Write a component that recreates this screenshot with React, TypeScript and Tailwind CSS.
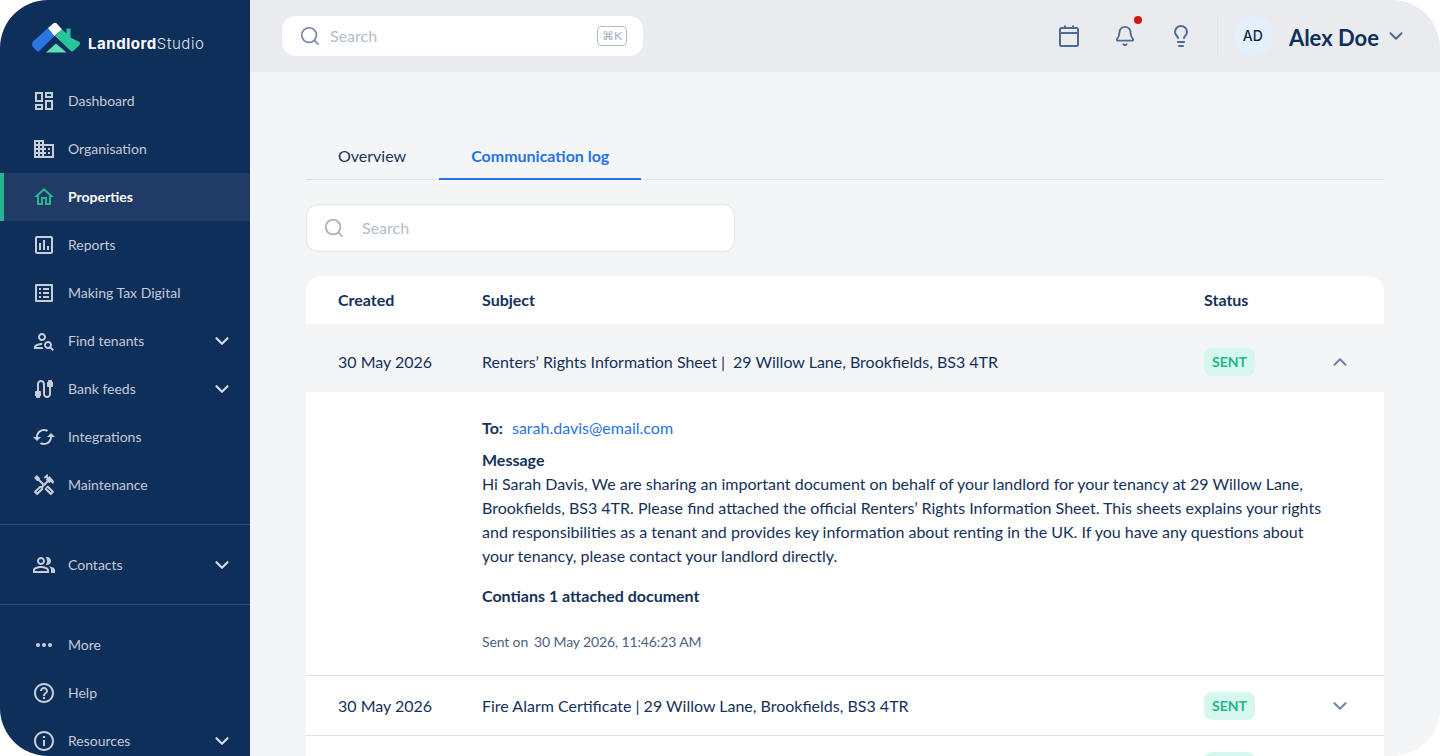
import type { ComponentType, ReactNode } from 'react';
import { Search, ChevronDown, ChevronUp, Bell, Lightbulb } from 'lucide-react';
import {
  MdOutlineDashboard,
  MdOutlineDomain,
  MdOutlineHome,
  MdOutlineAssessment,
  MdOutlineListAlt,
  MdOutlinePersonSearch,
  MdOutlineCable,
  MdOutlineSync,
  MdOutlineHandyman,
  MdOutlinePeopleAlt,
  MdMoreHoriz,
  MdHelpOutline,
  MdInfoOutline,
} from 'react-icons/md';

type NavItem = {
  label: string;
  icon: ComponentType<{ size?: number; className?: string }>;
  caret?: boolean;
  active?: boolean;
  iconClass?: string;
};

const mainNav: NavItem[] = [
  { label: 'Dashboard', icon: MdOutlineDashboard },
  { label: 'Organisation', icon: MdOutlineDomain },
  { label: 'Properties', icon: MdOutlineHome, active: true },
  { label: 'Reports', icon: MdOutlineAssessment },
  { label: 'Making Tax Digital', icon: MdOutlineListAlt },
  { label: 'Find tenants', icon: MdOutlinePersonSearch, caret: true },
  { label: 'Bank feeds', icon: MdOutlineCable, caret: true },
  { label: 'Integrations', icon: MdOutlineSync, iconClass: 'rotate-90' },
  { label: 'Maintenance', icon: MdOutlineHandyman },
];

const bottomNav: NavItem[] = [
  { label: 'More', icon: MdMoreHoriz },
  { label: 'Help', icon: MdHelpOutline },
  { label: 'Resources', icon: MdInfoOutline, caret: true },
];

function Logo() {
  return (
    <svg width="48" height="32" viewBox="32 22 48 32" className="shrink-0">
      <path d="M33 41.500 48 28 55 35.500 39.500 50.800Q38 52 36.500 50.800L33 47Q31 44 33 41.500Z" fill="#2b74e2" />
      <path d="M48 28 53.500 23.300Q55 22.300 56.500 23.300L62 29.500 54.500 36Z" fill="#ffffff" />
      <path d="M62 29.500 66.500 33.500V28.500H70.500V37.500L79.500 42Q80.500 43.500 79.500 45L73.500 50.800Q72 52 70.500 50.800L55 36Z" fill="#28c49a" />
      <path d="M46 52.500 56 43.500 66.500 52.500Z" fill="#5fe0b8" />
    </svg>
  );
}

function NavRow({ item }: { item: NavItem }) {
  const Icon = item.icon;
  return (
    <div
      className={
        item.active
          ? 'h-12 shrink-0 flex items-center pl-8 pr-[17px] bg-[#203c66] relative'
          : 'h-12 shrink-0 flex items-center pl-8 pr-[17px]'
      }
    >
      {item.active && <span className="absolute left-0 top-0 bottom-0 w-1 bg-[#27b58f]" />}
      <Icon
        size={24}
        className={(item.active ? 'text-[#27b58f] shrink-0 ' : 'text-[#c8ced8] shrink-0 ') + (item.iconClass ?? '')}
      />
      <span
        className={
          item.active
            ? 'ml-3 flex-1 text-sm font-bold text-white'
            : 'ml-3 flex-1 text-sm text-[#c3cad6]'
        }
      >
        {item.label}
      </span>
      {item.caret && <ChevronDown size={22} strokeWidth={2.4} className="text-[#d5dae2]" />}
    </div>
  );
}

function Sidebar() {
  return (
    <aside className="w-[250px] shrink-0 bg-[#0f2f5b] flex flex-col">
      <div className="h-[77px] shrink-0 flex items-start pl-8 pt-[22px]">
        <Logo />
        <span className="ml-2 mt-3 text-[15px] leading-5 text-white font-['Inter',sans-serif] font-bold tracking-[0.55px]">
          Landlord<span className="font-light text-[#dfe4ea]">Studio</span>
        </span>
      </div>
      {mainNav.map((item) => (
        <NavRow key={item.label} item={item} />
      ))}
      <div className="mt-[15px] shrink-0 border-t border-[#2b4770] pt-4 pb-[15px]">
        <NavRow item={{ label: 'Contacts', icon: MdOutlinePeopleAlt, caret: true }} />
      </div>
      <div className="shrink-0 border-t border-[#2b4770] pt-4">
        {bottomNav.map((item) => (
          <NavRow key={item.label} item={item} />
        ))}
      </div>
    </aside>
  );
}

function TopBar() {
  return (
    <header className="h-[72px] shrink-0 bg-[#e9ebef] flex items-center pl-8 pr-[33px]">
      <div className="w-[361px] h-10 bg-white rounded-[14px] flex items-center pl-[17px] pr-4">
        <Search size={22} strokeWidth={1.9} className="text-[#7688a6]" />
        <span className="ml-[9px] flex-1 text-base text-[#b0bbcb]">Search</span>
        <span className="w-[30px] h-5 border border-[#b0bbcb] rounded-[4px] flex items-center justify-center text-xs text-[#a3afc1]">
          ⌘K
        </span>
      </div>
      <div className="ml-auto flex items-center">
        <svg width="24" height="24" viewBox="0 0 24 24" fill="none" stroke="#4d6a94" strokeWidth="2" className="mr-8">
          <rect x="3" y="4" width="18" height="18" rx="1.500" />
          <path d="M3 9H21M8 1.500V5M16 1.500V5" />
        </svg>
        <div className="relative mr-8 w-6 flex justify-center">
          <Bell size={22} strokeWidth={2} className="text-[#4d6a94]" />
          <span className="absolute -top-[9px] right-[-5px] w-2 h-2 rounded-full bg-[#d0180f]" />
        </div>
        <div className="w-6 flex justify-center mr-6">
          <Lightbulb size={24} strokeWidth={2} className="text-[#4d6a94]" />
        </div>
        <div className="w-px h-10 bg-[#dfe1e6] mr-[15px]" />
        <div className="w-10 h-10 rounded-full bg-[#e3f0fc] flex items-center justify-center text-sm font-['Inter',sans-serif] font-medium text-[#14233c]">
          AD
        </div>
        <span className="ml-4 pt-[3px] text-[22px] font-bold leading-7 text-[#0f2f5b]">Alex Doe</span>
        <ChevronDown size={22} strokeWidth={2.2} className="ml-[6px] text-[#4d6a94]" />
      </div>
    </header>
  );
}

function Tabs() {
  return (
    <div className="flex h-12 border-b border-[#dfe2e7]">
      <div className="h-12 pl-8 pr-[33px] flex items-center text-base text-[#1a3358]">Overview</div>
      <div className="h-12 px-8 pt-[2px] flex items-center text-base font-bold text-[#2673e4] border-b-2 border-[#2673e4]">
        Communication log
      </div>
    </div>
  );
}

function SearchField() {
  return (
    <div className="mt-6 w-[429px] h-12 bg-white border border-[#dfe3e8] rounded-xl flex items-center pl-4">
      <Search size={22} strokeWidth={1.9} className="text-[#a3afc1]" />
      <span className="ml-[17px] text-base text-[#b0bbcb]">Search</span>
    </div>
  );
}

function SentBadge({ children }: { children?: ReactNode }) {
  return (
    <span className="w-[51px] h-7 bg-[#d6f7ed] rounded-lg flex items-center justify-center text-sm font-bold text-[#27b58f]">
      {children}
    </span>
  );
}

function LogRow({
  date,
  subject,
  toggle,
  className,
}: {
  date: string;
  subject: ReactNode;
  toggle?: ReactNode;
  className: string;
}) {
  return (
    <div className={'grid grid-cols-[144px_722px_100px_1fr] items-center pl-8 text-base text-[#15315a] ' + className}>
      <span>{date}</span>
      <span>{subject}</span>
      <SentBadge>SENT</SentBadge>
      {toggle}
    </div>
  );
}

function Details() {
  return (
    <div className="bg-white pl-44 pr-[54px] pt-6 pb-[23px] text-base leading-6 text-[#15315a]">
      <div>
        <span className="font-bold">To:</span>
        <span className="ml-[9px] text-[#2673e4]">sarah.davis@email.com</span>
      </div>
      <div className="mt-2 font-bold">Message</div>
      <p>
        Hi Sarah Davis, We are sharing an important document on behalf of your landlord for your tenancy at 29 Willow Lane,
        Brookfields, BS3 4TR. Please find attached the official Renters’ Rights Information Sheet. This sheets explains your
        rights and responsibilities as a tenant and provides key information about renting in the UK. If you have any
        questions about your tenancy, please contact your landlord directly.
      </p>
      <div className="mt-4 font-bold">Contians 1 attached document</div>
      <div className="mt-6 text-sm tracking-[-0.13px] text-[#4d6280]">
        Sent on<span className="ml-[6px]">30 May 2026, 11:46:23 AM</span>
      </div>
    </div>
  );
}

function LogTable() {
  return (
    <div className="mt-6 rounded-t-2xl overflow-hidden">
      <div className="h-12 bg-white grid grid-cols-[144px_722px_1fr] items-center pl-8 text-base font-bold text-[#15315a]">
        <span>Created</span>
        <span>Subject</span>
        <span>Status</span>
      </div>
      <LogRow
        className="h-[68px] pt-2 bg-[#f4f5f7]"
        date="30 May 2026"
        subject={
          <>
            Renters’ Rights Information Sheet |<span className="ml-2">29 Willow Lane, Brookfields, BS3 4TR</span>
          </>
        }
        toggle={<ChevronUp size={22} strokeWidth={2.4} className="ml-[25px] text-[#7688a6]" />}
      />
      <Details />
      <LogRow
        className="h-[61px] bg-white border-t border-b border-[#e0e1e5]"
        date="30 May 2026"
        subject="Fire Alarm Certificate | 29 Willow Lane, Brookfields, BS3 4TR"
        toggle={<ChevronDown size={22} strokeWidth={2.4} className="ml-[25px] text-[#7688a6]" />}
      />
      {/* only the top of this row's badge is in view */}
      <div className="h-[60px] bg-white pt-4 pl-[898px]">
        <SentBadge />
      </div>
    </div>
  );
}

export default function App() {
  return (
    <div className="w-[1440px] h-[756px] bg-white overflow-hidden font-['Lato',sans-serif]">
      <div className="h-full flex rounded-[48px] overflow-hidden bg-[#f4f5f7]">
        <Sidebar />
        <div className="flex-1 flex flex-col min-w-0">
          <TopBar />
          <main className="flex-1 px-14 pt-[60px] overflow-hidden">
            <Tabs />
            <SearchField />
            <LogTable />
          </main>
        </div>
      </div>
    </div>
  );
}
